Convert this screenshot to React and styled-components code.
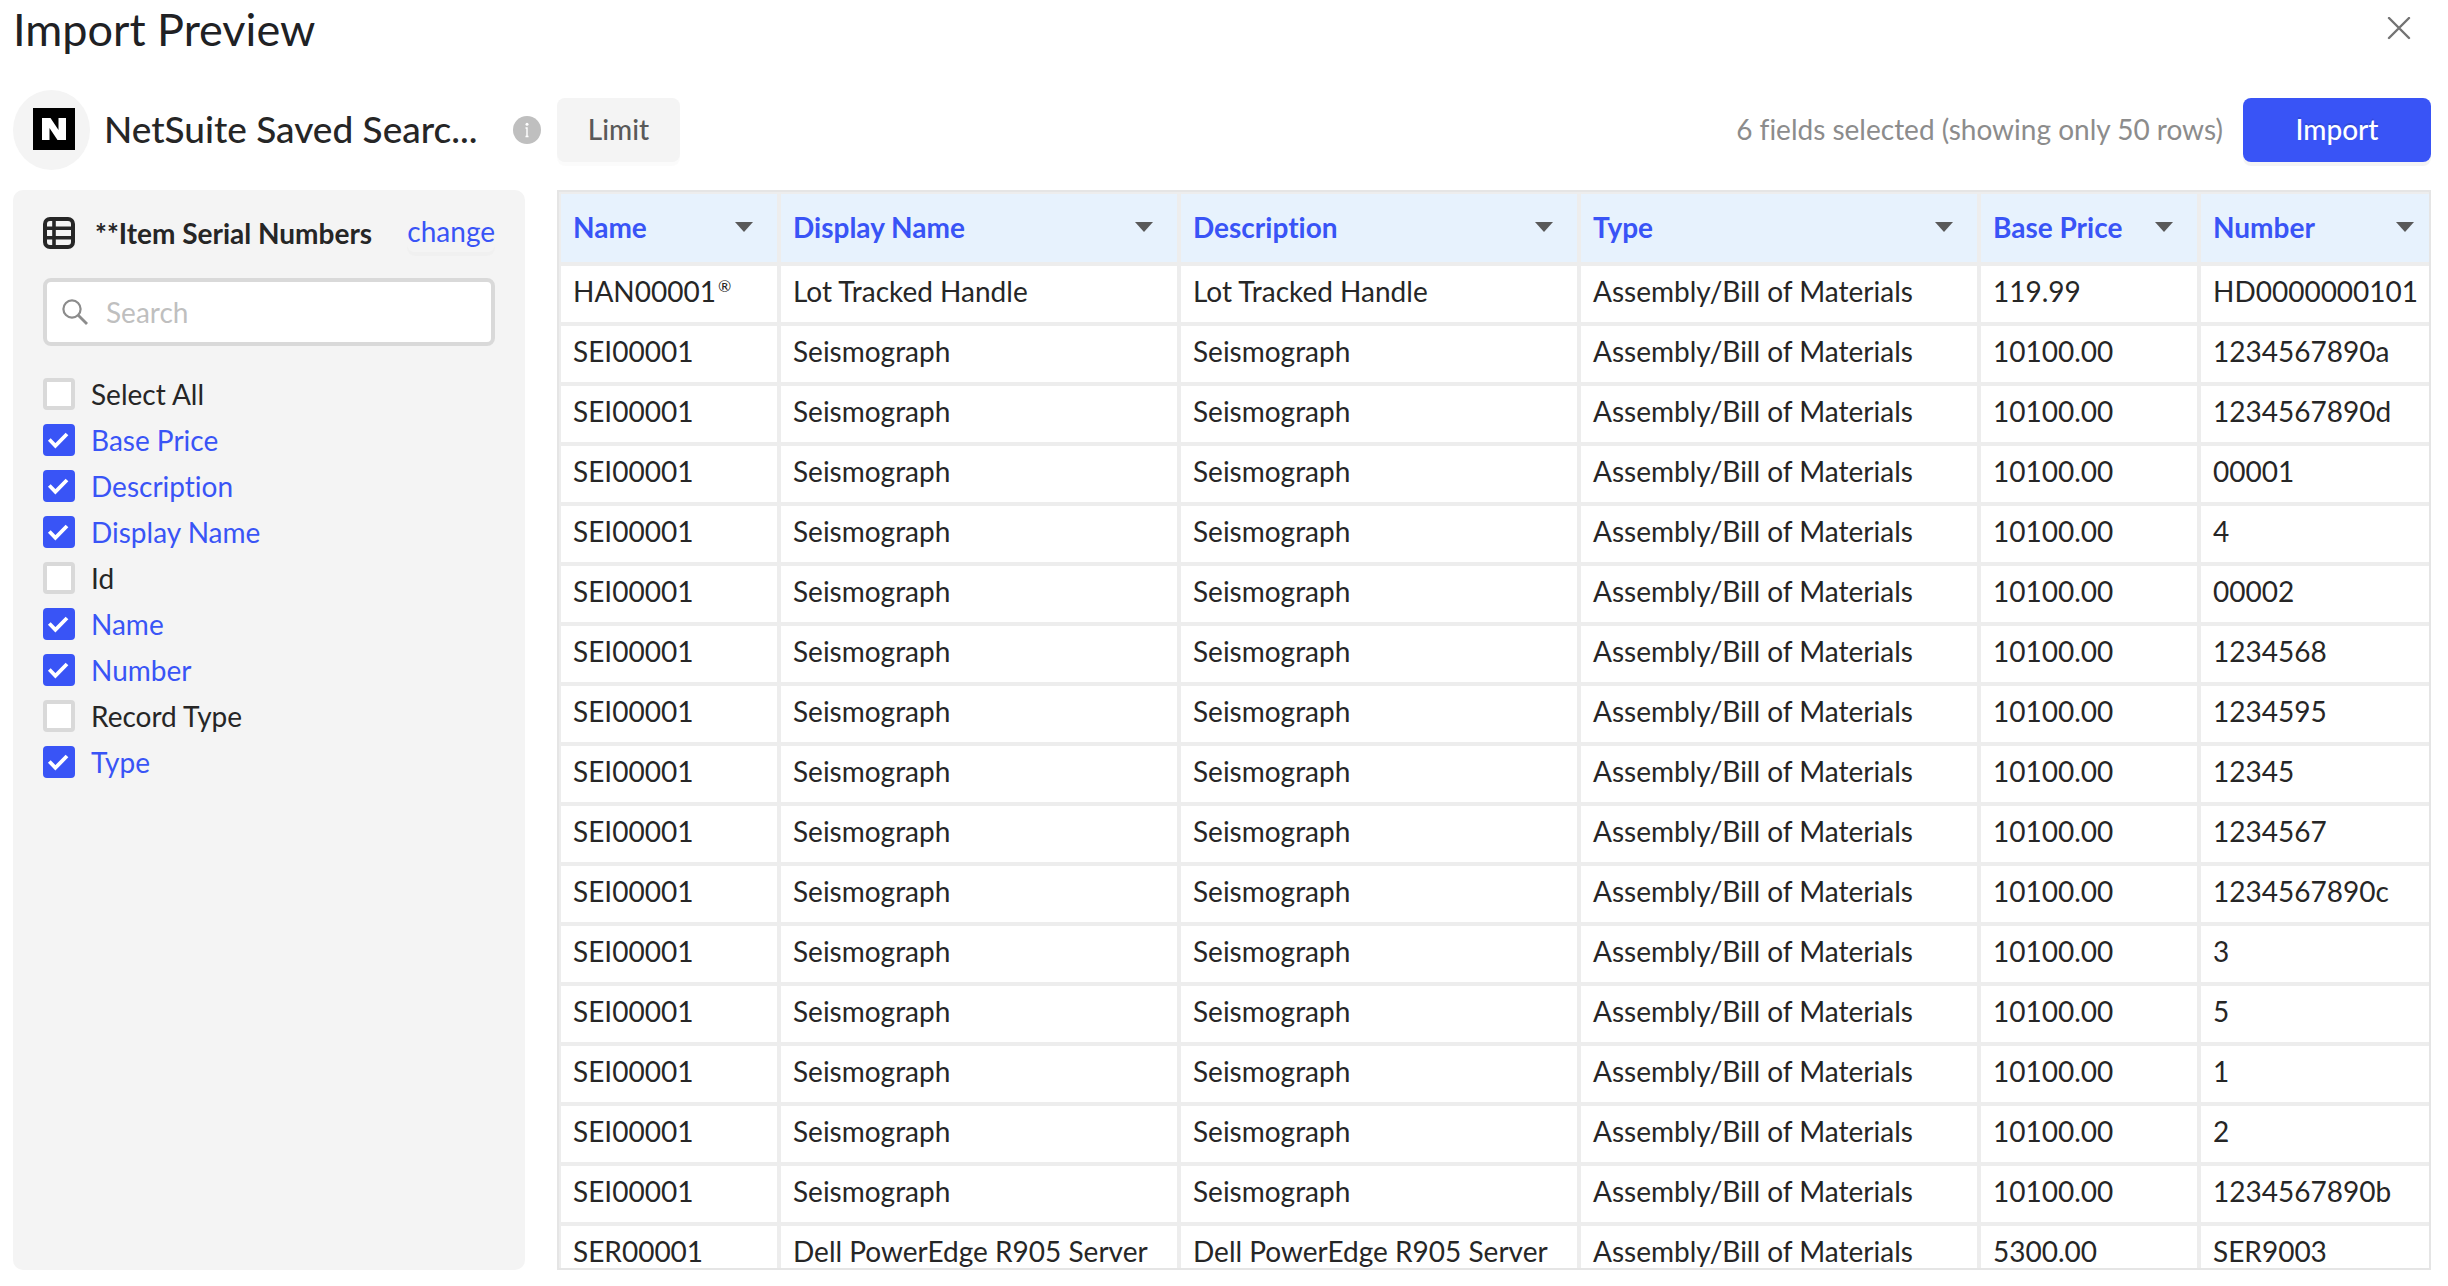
import React, { useState } from "react";
import styled, { createGlobalStyle } from "styled-components";

const blue = "#3954f6";
const ink = "#262626";
const line = "#ededed";
const frame = "#e5e5e5";
const grey = "#f4f4f4";

const GlobalStyle = createGlobalStyle`
  * { box-sizing: border-box; }
  body { margin: 0; background: #fff; font-variant-ligatures: none; }
  body, button, input { font-family: Lato, "Open Sans", sans-serif; font-size: 28px; line-height: 34px; color: ${ink}; }
  button { margin: 0; padding: 0; border: 0; background: none; cursor: pointer; }
`;

const Page = styled.main`
  display: flex;
  flex-direction: column;
  height: 100vh;
  padding: 0 17px 16px 13px;
`;

const TitleBar = styled.header`
  display: flex;
  justify-content: space-between;
  align-items: center;
  height: 58px;
  margin-bottom: 32px;
`;

const Title = styled.h1`
  margin: 0;
  font-size: 45px;
  line-height: 58px;
  font-weight: 400;
  color: #202124;
`;

const CloseButton = styled.button`
  display: grid;
  place-items: center;
  width: 64px;
  height: 56px;
`;

const Toolbar = styled.div`
  display: flex;
  align-items: center;
  gap: 16px;
  height: 80px;
  margin-bottom: 20px;
`;

const Source = styled.div`
  display: flex;
  align-items: center;
  flex: none;
  width: 528px;
`;

const Logo = styled.span`
  display: flex;
  align-items: center;
  flex: none;
  width: 77px;
  height: 80px;
  padding: 0 15px 2px 20px;
  border-radius: 50%;
  background: ${grey};
`;

const SourceName = styled.h2`
  flex: 1;
  margin: 0;
  padding: 0 0 2px 14px;
  font-size: 37px;
  line-height: 44px;
  font-weight: 500;
  white-space: nowrap;
`;

const Info = styled.span`
  display: grid;
  flex: none;
`;

const Button = styled.button`
  height: 64px;
  min-width: ${(p) => (p.$primary ? "188px" : "123px")};
  padding: 0 30px 2px;
  border-radius: 8px;
  font-weight: 500;
  color: ${(p) => (p.$primary ? "#fff" : "#595959")};
  background: ${(p) => (p.$primary ? blue : grey)};
  box-shadow: 0 4px 0 ${(p) => (p.$primary ? "rgba(0,0,0,0.045)" : "rgba(0,0,0,0.016)")};
  text-shadow: ${(p) => (p.$primary ? "0 -2px 0 rgba(0,0,0,0.12)" : "none")};
`;

const Status = styled.p`
  margin: 0 4px 0 auto;
  padding-bottom: 2px;
  color: #8c8c8c;
`;

const Body = styled.div`
  display: flex;
  gap: 32px;
  flex: 1;
  min-height: 0;
`;

const Sidebar = styled.aside`
  flex: none;
  width: 512px;
  padding: 26px 30px;
  border-radius: 10px;
  background: ${grey};
`;

const RecordHeader = styled.div`
  display: flex;
  align-items: center;
  height: 34px;
  margin-bottom: 28px;
`;

const RecordName = styled.h3`
  flex: 1;
  margin: 0 0 0 20px;
  font-size: 28px;
  line-height: 34px;
  font-weight: 700;
  white-space: nowrap;
`;

const ChangeButton = styled.button`
  padding-bottom: 4px;
  border-radius: 8px;
  color: ${blue};
  box-shadow: 0 4px 0 rgba(0, 0, 0, 0.016);
`;

const SearchBox = styled.label`
  display: flex;
  align-items: center;
  gap: 18px;
  height: 68px;
  margin-bottom: 32px;
  padding: 0 15px;
  border: 4px solid #d9d9d9;
  border-radius: 8px;
  background: #fff;
`;

const SearchInput = styled.input`
  flex: 1;
  min-width: 0;
  padding: 0;
  border: 0;
  outline: 0;
  background: transparent;
  &::placeholder { color: #bfbfbf; opacity: 1; }
`;

const FieldList = styled.ul`
  display: grid;
  gap: 14px;
  margin: 0;
  padding: 0;
  list-style: none;
`;

const Field = styled.label`
  display: flex;
  align-items: center;
  gap: 16px;
  height: 32px;
  color: ${(p) => (p.$checked ? blue : ink)};
`;

const Tick = styled.span`
  display: grid;
  flex: none;
  width: 32px;
  height: 32px;
  > * { grid-area: 1 / 1; }
  svg { pointer-events: none; }
`;

const Checkbox = styled.input`
  appearance: none;
  width: 32px;
  height: 32px;
  margin: 0;
  border: 4px solid #d9d9d9;
  border-radius: 4px;
  background: #fff;
  &:checked { border-color: ${blue}; background: ${blue}; }
`;

const TableFrame = styled.section`
  flex: 1;
  min-width: 0;
  overflow: auto;
  scrollbar-width: none;
  border: 2px solid ${frame};
`;

const Table = styled.table`
  width: 100%;
  table-layout: fixed;
  border-collapse: separate;
  border-spacing: 0;
`;

const Col = styled.col`
  width: ${(p) => p.$width || "auto"};
`;

const HeadCell = styled.th`
  height: 72px;
  padding: 0 24px 2px 12px;
  border: 2px solid ${line};
  background: #e7f2fd;
  color: ${blue};
  font-weight: 700;
  text-align: left;
  &:last-child { padding-right: 15px; border-right: 0; }
`;

const HeadContent = styled.div`
  display: flex;
  align-items: center;
  justify-content: space-between;
  white-space: nowrap;
`;

const SortButton = styled.button`
  display: grid;
  place-items: center;
  height: 34px;
`;

const Cell = styled.td`
  height: 60px;
  padding: 0 12px 6px;
  border: 2px solid ${line};
  white-space: nowrap;
  &:last-child { padding-right: 0; border-right: 0; }
`;

const Mark = styled.sup`
  padding-left: 2px;
  font-size: 16px;
  line-height: 0;
`;

const columns = [
  ["Name", "220px"],
  ["Display Name", "400px"],
  ["Description", "400px"],
  ["Type", "400px"],
  ["Base Price", "220px"],
  ["Number", null],
];

const seismographs = [
  "1234567890a", "1234567890d", "00001", "4", "00002", "1234568", "1234595", "12345",
  "1234567", "1234567890c", "3", "5", "1", "2", "1234567890b",
];

const assembly = "Assembly/Bill of Materials";

const rows = [
  [<>HAN00001<Mark>®</Mark></>, "Lot Tracked Handle", "Lot Tracked Handle", assembly, "119.99", "HD0000000101"],
  ...seismographs.map((n) => ["SEI00001", "Seismograph", "Seismograph", assembly, "10100.00", n]),
  ["SER00001", "Dell PowerEdge R905 Server", "Dell PowerEdge R905 Server", assembly, "5300.00", "SER9003"],
];

const initialFields = [
  ["Select All", false],
  ["Base Price", true],
  ["Description", true],
  ["Display Name", true],
  ["Id", false],
  ["Name", true],
  ["Number", true],
  ["Record Type", false],
  ["Type", true],
];

const CloseIcon = () => (
  <svg width="24" height="24" viewBox="0 0 24 24" fill="none" stroke="#737373" strokeWidth="2.4" strokeLinecap="round">
    <path d="M2 1 22 21M22 1 2 21" />
  </svg>
);

const NetSuiteIcon = () => (
  <svg width="42" height="42" viewBox="0 0 42 42">
    <rect width="42" height="42" fill="#000" />
    <path d="M9 10h8.500l8 12V10H33v22h-8.500l-8-12v12H9z" fill="#fff" />
  </svg>
);

const InfoIcon = () => (
  <svg width="28" height="28" viewBox="0 0 28 28">
    <circle cx="14" cy="14" r="14" fill="#bfbfbf" />
    <circle cx="14" cy="8.300" r="1.500" fill="#fff" />
    <path d="M12.500 12H14v8.500M12.500 20.500h3" stroke="#fff" strokeWidth="1.400" fill="none" />
  </svg>
);

const TableIcon = () => (
  <svg width="32" height="32" viewBox="0 0 32 32" fill="none" stroke={ink} strokeWidth="4">
    <rect x="2" y="2" width="28" height="28" rx="5" />
    <path d="M11 2v28" strokeWidth="3.600" />
    <path d="M2 11.300h28M2 20.700h28" strokeWidth="3.600" />
  </svg>
);

const SearchIcon = () => (
  <svg width="26" height="26" viewBox="0 0 26 26" fill="none" stroke="#8c8c8c" strokeWidth="2.200">
    <circle cx="10" cy="10" r="8.600" />
    <path d="M16 16 25 25" strokeWidth="2.800" />
  </svg>
);

const CheckIcon = () => (
  <svg width="32" height="32" viewBox="0 0 32 32" fill="none" stroke="#fff" strokeWidth="3.800">
    <path d="M6.300 15.500 12.400 21.800 24 10" />
  </svg>
);

const ArrowIcon = () => (
  <svg width="18" height="10" viewBox="0 0 18 10">
    <path d="M0 0h18L9 10z" fill="#595959" />
  </svg>
);

export default function App() {
  const [fields, setFields] = useState(initialFields);
  const toggle = (name) =>
    setFields((list) => list.map(([n, on]) => [n, n === name ? !on : on]));

  return (
    <>
      <GlobalStyle />
      <Page>
        <TitleBar>
          <Title>Import Preview</Title>
          <CloseButton aria-label="Close"><CloseIcon /></CloseButton>
        </TitleBar>
        <Toolbar>
          <Source>
            <Logo><NetSuiteIcon /></Logo>
            <SourceName>NetSuite Saved Searc...</SourceName>
            <Info><InfoIcon /></Info>
          </Source>
          <Button>Limit</Button>
          <Status>6 fields selected (showing only 50 rows)</Status>
          <Button $primary>Import</Button>
        </Toolbar>
        <Body>
          <Sidebar>
            <RecordHeader>
              <TableIcon />
              <RecordName>**Item Serial Numbers</RecordName>
              <ChangeButton>change</ChangeButton>
            </RecordHeader>
            <SearchBox>
              <SearchIcon />
              <SearchInput type="search" placeholder="Search" aria-label="Search" />
            </SearchBox>
            <FieldList>
              {fields.map(([name, on]) => (
                <li key={name}>
                  <Field $checked={on}>
                    <Tick>
                      <Checkbox type="checkbox" checked={on} onChange={() => toggle(name)} />
                      {on && <CheckIcon />}
                    </Tick>
                    {name}
                  </Field>
                </li>
              ))}
            </FieldList>
          </Sidebar>
          <TableFrame>
            <Table>
              <colgroup>
                {columns.map(([name, width]) => <Col key={name} $width={width} />)}
              </colgroup>
              <thead>
                <tr>
                  {columns.map(([name]) => (
                    <HeadCell key={name} scope="col">
                      <HeadContent>
                        {name}
                        <SortButton aria-label={`${name} options`}><ArrowIcon /></SortButton>
                      </HeadContent>
                    </HeadCell>
                  ))}
                </tr>
              </thead>
              <tbody>
                {rows.map((row, i) => (
                  <tr key={i}>
                    {row.map((value, j) => <Cell key={j}>{value}</Cell>)}
                  </tr>
                ))}
              </tbody>
            </Table>
          </TableFrame>
        </Body>
      </Page>
    </>
  );
}
